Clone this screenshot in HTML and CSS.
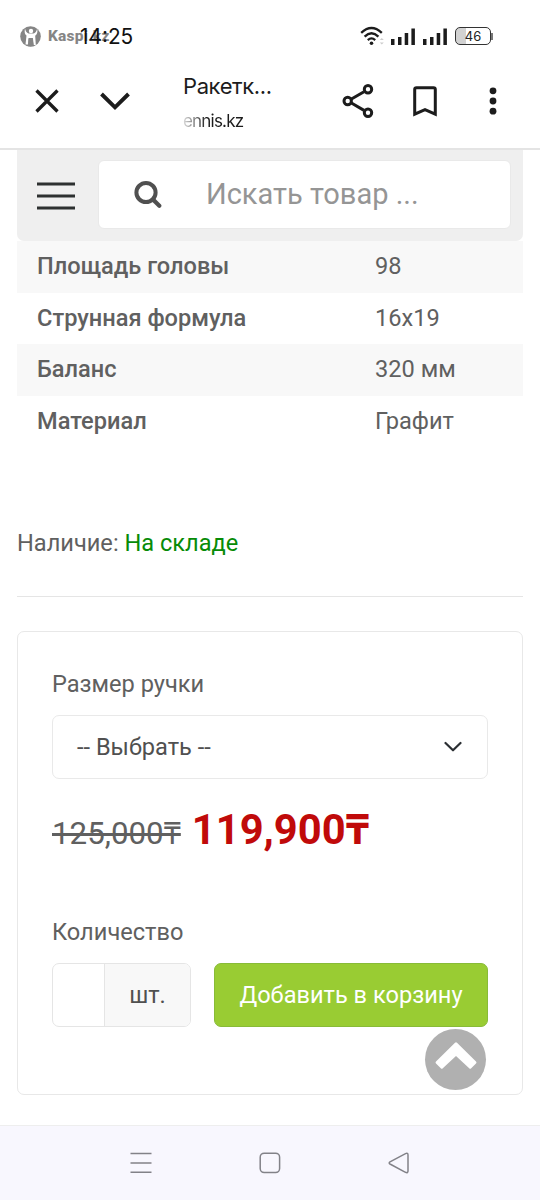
FILE: index.html
```html
<!DOCTYPE html>
<html lang="ru">
<head>
<meta charset="utf-8">
<meta name="viewport" content="width=device-width, initial-scale=1">
<title>Ракетка</title>
<link rel="stylesheet" href="styles.css">
</head>
<body>
<div class="screen">
  <header class="chrome">
    <div class="status">
      <div class="status-left">
        <svg class="kaspi-logo" width="21" height="21" viewBox="0 0 21 21">
          <circle cx="10.5" cy="10.5" r="10.3" fill="#858585"/>
          <path d="M5 2.500C4.200 6 4.800 8.500 6.500 9.500L5.500 18.500h2.600l.6-5.500h4l.8 6h2.300l-.6-9.300c2-1.200 2.600-3.700 2-7.200-.7 3-1.900 4.500-3.700 5H8.500C6.700 6.800 5.500 5.300 5 2.500z" fill="#fff"/>
          <circle cx="11" cy="5" r="2.200" fill="#fff"/>
          <path d="M8.500 12h4.400l.9 8.300H8z" fill="#858585"/>
        </svg>
        <span class="carrier">Kaspi.kz</span>
        <span class="clock">14:25</span>
      </div>
      <div class="status-right">
        <svg width="25" height="20" viewBox="0 0 25 20" fill="none" stroke="#1c1c1c" stroke-width="2.300">
          <path d="M1.200 6.800Q11.500-2.800 21.800 6.800M4.600 10.600Q11.500 4 18.400 10.600M7.800 14.100Q11.500 10.700 15.200 14.100"/>
          <circle cx="11.500" cy="17.300" r="1.800" fill="#1c1c1c" stroke="none"/>
          <path d="M19.800 14l2-2 2 2zM19.800 16.500l2 2 2-2z" fill="#ccc" stroke="none"/>
        </svg>
        <svg class="signal" width="24" height="17" viewBox="0 0 24 17" fill="#1c1c1c"><path d="M0 11h3.500v6H0zM7 9h3.500v8H7zM13.700 5h3.500v12h-3.500zM20.400.5h3.500V17h-3.500z"/></svg>
        <svg class="signal signal-second" width="24" height="17" viewBox="0 0 24 17" fill="#1c1c1c"><path d="M0 11h3.500v6H0zM7 9h3.500v8H7zM13.700 5h3.500v12h-3.500zM20.400.5h3.500V17h-3.500z"/></svg>
        <div class="battery"><span class="battery-text">46</span></div>
        <span class="battery-tip"></span>
      </div>
    </div>
    <div class="toolbar">
      <svg class="close" width="24" height="24" viewBox="0 0 24 24"><path d="M1.500 1.500l21 21M22.500 1.500l-21 21" stroke="#1c1c1c" stroke-width="3.300"/></svg>
      <svg class="collapse" width="30" height="19" viewBox="0 0 30 19"><path d="M1.500 2L15 15.300 28.500 2" fill="none" stroke="#1c1c1c" stroke-width="3.900"/></svg>
      <div class="heading">
        <div class="page-title">Ракетк...</div>
        <div class="page-host">ennis.kz</div>
      </div>
      <svg class="share" width="32" height="34" viewBox="0 0 32 34" fill="none" stroke="#1c1c1c" stroke-width="3"><path d="M9 15.300l13-7.600M9 18.800l13 7.600"/><circle cx="5.700" cy="17" r="3.700"/><circle cx="26" cy="5.200" r="3.700"/><circle cx="26" cy="28.800" r="3.700"/></svg>
      <svg class="bookmark" width="24" height="31" viewBox="0 0 24 31"><path d="M1.700 28.200V3.500q0-1.800 1.800-1.800h17q1.800 0 1.800 1.800v24.700L12 23.700z" fill="none" stroke="#1c1c1c" stroke-width="3"/></svg>
      <svg class="more" width="8" height="28" viewBox="0 0 8 28" fill="#1c1c1c"><circle cx="4" cy="3.800" r="3.400"/><circle cx="4" cy="14" r="3.400"/><circle cx="4" cy="24.200" r="3.400"/></svg>
    </div>
  </header>

  <main class="content">
    <div class="searchbar">
      <svg class="menu" width="38" height="28" viewBox="0 0 38 28"><path d="M0 2h38M0 14h38M0 26h38" stroke="#2d3030" stroke-width="3"/></svg>
      <div class="search-field">
        <svg width="29" height="29" viewBox="0 0 29 29" fill="none" stroke="#505050"><circle cx="13" cy="12.500" r="9.600" stroke-width="4"/><path d="M20 19.500l6.300 6.300" stroke-width="4.200" stroke-linecap="round"/></svg>
        <span class="placeholder">Искать товар ...</span>
      </div>
    </div>
    <dl class="specs">
      <div class="spec"><dt>Площадь головы</dt><dd>98</dd></div>
      <div class="spec"><dt>Струнная формула</dt><dd>16x19</dd></div>
      <div class="spec"><dt>Баланс</dt><dd>320 мм</dd></div>
      <div class="spec"><dt>Материал</dt><dd>Графит</dd></div>
    </dl>
    <p class="stock">Наличие: <span class="in-stock">На складе</span></p>
    <section class="card">
      <div class="label">Размер ручки</div>
      <div class="select">
        <span>-- Выбрать --</span>
        <svg width="18" height="12" viewBox="0 0 18 12"><path d="M1.500 2L9 9.300 16.500 2" fill="none" stroke="#2b2f33" stroke-width="2.200" stroke-linecap="round" stroke-linejoin="round"/></svg>
      </div>
      <div class="prices"><span class="old-price">125,000₸</span><span class="price">119,900₸</span></div>
      <div class="label">Количество</div>
      <div class="buy-row">
        <div class="quantity"><span class="amount"></span><span class="unit">шт.</span></div>
        <div class="buy">Добавить в корзину</div>
      </div>
      <div class="to-top"><svg width="42" height="29" viewBox="0 0 42 29"><path d="M20 1.700q1-1 2 0L41 20.500q1 1 0 2l-4.800 4.700q-1 1-2 0L21 15 7.800 27.200q-1 1-2 0L1 22.500q-1-1 0-2z" fill="#fff"/></svg></div>
    </section>
  </main>

  <nav class="system-nav">
    <svg width="22" height="22" viewBox="0 0 22 22"><path d="M.5 1.500h21M.5 11h21M.5 20.300h21" stroke="#828288" stroke-width="1.600"/></svg>
    <svg width="22" height="22" viewBox="0 0 22 22"><rect x="1.200" y="1.200" width="19.400" height="19.400" rx="4" fill="none" stroke="#828288" stroke-width="1.500"/></svg>
    <svg width="22" height="22" viewBox="0 0 22 22"><path d="M2 9.900L17.500 1.600Q20 .6 20 3v16q0 2.400-2.500 1.300L2 12q-1.600-1 0-2.100z" fill="none" stroke="#828288" stroke-width="1.500"/></svg>
  </nav>
</div>
</body>
</html>
```
FILE: styles.css
```css
* { box-sizing: border-box; }
body { margin: 0; background: #fff; font-family: Roboto, "Noto Sans", sans-serif; color: #606060; }
svg { display: block; flex: none; }
.screen { width: 540px; height: 1200px; display: flex; flex-direction: column; overflow: hidden; white-space: nowrap; }
.chrome { height: 150px; border-bottom: 2px solid #e4e4e4; flex: none; }

.status { height: 62px; padding: 26px 47px 0 20px; display: flex; justify-content: space-between; align-items: flex-start; }
.status-left { display: flex; position: relative; }
.carrier { margin-left: 7px; font-size: 15.500px; line-height: 20px; font-weight: 800; letter-spacing: .2px; color: #858585; }
.clock { position: absolute; left: 60px; top: -1px; font: 20.800px/24px Inter, sans-serif; color: #111; }
.status-right { display: flex; }
.signal { margin: 2px 0 0 6px; }
.signal-second { margin-left: 8px; }
.battery { width: 36px; height: 18px; margin: 1px 0 0 8px; border: 1.500px solid #333; border-radius: 5px; background: linear-gradient(90deg, #d2d2d2 28%, #fff 28%); text-align: center; }
.battery-text { display: block; font: 13px/16px Inter, sans-serif; color: #222; }
.battery-tip { width: 2px; height: 7px; margin-top: 7px; background: #777; }

.toolbar { height: 78px; display: flex; align-items: center; padding-left: 35px; }
.collapse { margin-left: 41px; }
.heading { width: 92px; margin: 5px 0 0 53px; font-family: Inter, Roboto, sans-serif; color: #1c1c1c; }
.page-title { font-size: 22px; line-height: 34px; letter-spacing: -.4px; }
.page-host { font-size: 17px; line-height: 36px; letter-spacing: -.8px; background: linear-gradient(90deg, #ddd 0, #1c1c1c 24px); -webkit-background-clip: text; background-clip: text; color: transparent; }
.share { margin-left: 67px; }
.bookmark { margin-left: 39px; }
.more { margin-left: 52px; }

.content { flex: 1; padding: 0 17px; }
.searchbar { height: 91px; padding: 10px 12px 12px 20px; display: flex; align-items: center; justify-content: space-between; background: #efefef; border-radius: 0 0 7px 7px; }
.menu { margin-top: 2px; }
.search-field { width: 413px; height: 69px; display: flex; align-items: center; padding-left: 34px; background: #fff; border: 1px solid #e9e9e9; border-radius: 6px; }
.placeholder { margin-left: 44px; padding-bottom: 2px; font-size: 29px; color: #959595; }
.specs { margin: 0; font-size: 23.600px; }
.spec { height: 51.700px; display: flex; align-items: center; padding: 0 0 2px 20px; }
.spec:nth-child(odd) { background: #f8f8f8; }
dt { width: 338px; font-weight: 500; }
dd { margin: 0; }
.stock { height: 149px; margin: 0; padding-top: 79px; border-bottom: 1px solid #e5e5e5; font-size: 23.600px; line-height: 32px; }
.in-stock { color: #078b07; }
.card { position: relative; height: 464px; margin-top: 34px; padding: 36px 34px 0; border: 1px solid #e8e8e8; border-radius: 7px; }
.label { font-size: 23.600px; line-height: 32px; }
.select { height: 64px; margin-top: 15px; padding: 0 25px 0 24px; display: flex; align-items: center; justify-content: space-between; border: 1.500px solid #e9e9e9; border-radius: 7px; font-size: 23.600px; color: #505050; }
.prices { height: 137px; padding-top: 23px; display: flex; align-items: baseline; line-height: 56px; }
.old-price { font-size: 31.300px; text-decoration: line-through; text-decoration-thickness: 2.500px; }
.price { margin-left: 11px; font-size: 41.700px; font-weight: 700; color: #c00a0a; }
.buy-row { display: flex; justify-content: space-between; margin-top: 15px; height: 64px; }
.quantity { width: 139px; display: flex; border: 1.500px solid #e5e5e5; border-radius: 7px; overflow: hidden; }
.amount { width: 52px; border-right: 1px solid #e5e5e5; }
.unit { flex: 1; display: flex; align-items: center; justify-content: center; background: #f8f8f8; font-size: 23.600px; color: #505050; }
.buy { width: 274px; display: flex; align-items: center; justify-content: center; background: #99cc33; border: 1px solid #88bb38; border-radius: 7px; color: #fff; font-size: 23.600px; }
.to-top { position: absolute; right: 36px; bottom: 4px; width: 61px; height: 61px; border-radius: 50%; background: #b0b0b0; display: flex; justify-content: center; padding-top: 12px; }
.system-nav { height: 75px; flex: none; display: flex; justify-content: space-between; align-items: center; padding: 0 130px; background: #f8f7fe; border-top: 1px solid #eee; }
```
